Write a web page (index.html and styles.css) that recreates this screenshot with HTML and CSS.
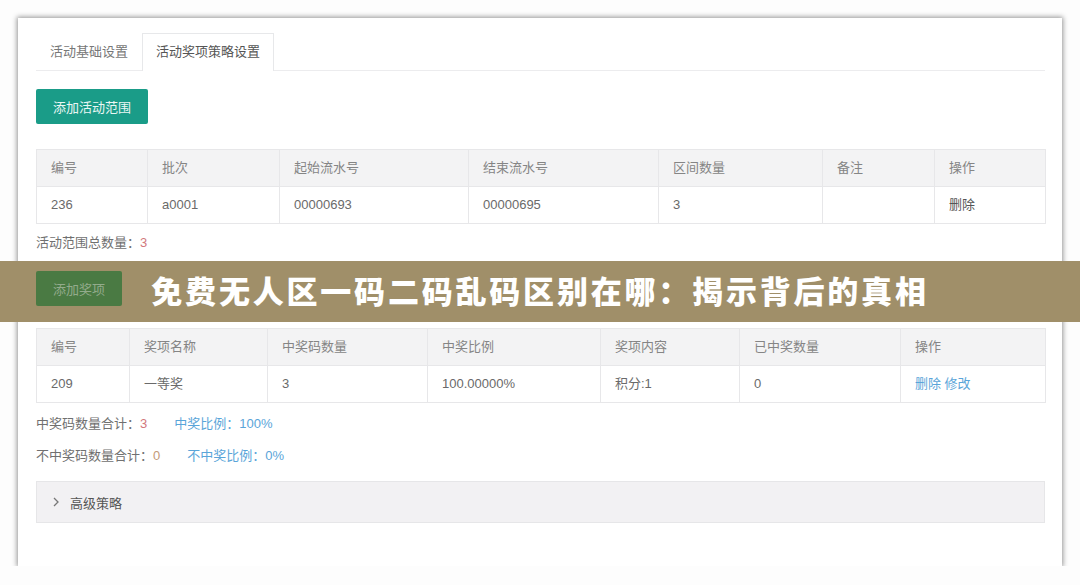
FILE: index.html
```html
<!DOCTYPE html>
<html lang="zh-CN">
<head>
  <meta charset="UTF-8">
  <title>活动奖项策略设置</title>
  <link rel="stylesheet" href="styles.css">
</head>
<body>

  <!-- 主面板 -->
  <div class="panel">
    <ul class="tabs">
      <li class="tab">活动基础设置</li>
      <li class="tab active">活动奖项策略设置</li>
    </ul>

    <div class="tab-body">
      <button class="btn btn-teal">添加活动范围</button>

      <!-- 活动范围 -->
      <table class="grid range-table">
        <thead>
          <tr><th>编号</th><th>批次</th><th>起始流水号</th><th>结束流水号</th><th>区间数量</th><th>备注</th><th>操作</th></tr>
        </thead>
        <tbody>
          <tr><td>236</td><td>a0001</td><td>00000693</td><td>00000695</td><td>3</td><td></td><td class="op-dark">删除</td></tr>
        </tbody>
      </table>
      <p class="summary">活动范围总数量：<span class="num-red">3</span></p>

      <button class="btn btn-prize">添加奖项</button>

      <!-- 奖项 -->
      <table class="grid prize-table">
        <thead>
          <tr><th>编号</th><th>奖项名称</th><th>中奖码数量</th><th>中奖比例</th><th>奖项内容</th><th>已中奖数量</th><th>操作</th></tr>
        </thead>
        <tbody>
          <tr><td>209</td><td>一等奖</td><td>3</td><td>100.00000%</td><td>积分:1</td><td>0</td><td class="op-link">删除 修改</td></tr>
        </tbody>
      </table>
      <p class="summary summary-first">中奖码数量合计：<span class="num-red">3</span><span class="rate">中奖比例：100%</span></p>
      <p class="summary summary-second">不中奖码数量合计：<span class="num-tan">0</span><span class="rate">不中奖比例：0%</span></p>

      <!-- 高级策略 -->
      <div class="collapse">
        <svg class="chevron" width="8" height="12" viewBox="0 0 8 12"><polyline points="2,2 6,6 2,10" fill="none" stroke="#777" stroke-width="1.3"/></svg>
        <span>高级策略</span>
      </div>
    </div>
  </div>

  <!-- 标题横幅 -->
  <div class="banner">免费无人区一码二码乱码区别在哪：揭示背后的真相</div>

</body>
</html>
```

FILE: styles.css
```css
body {
  margin: 0;
  padding: 0;
  background: #fdfdfd;
  font-family: "Liberation Sans", "Noto Sans CJK SC", sans-serif;
  font-size: 13px;
  color: #676a6c;
  position: relative;
}

/* 主面板 */
.panel {
  width: 1044px;
  height: 548px;
  margin: 18px 0 0 18px;
  padding: 15px 17px 0 18px;
  box-sizing: border-box;
  background: #fff;
  box-shadow: 0 0 5px 1px rgba(0, 0, 0, 0.42);
}

/* 选项卡 */
.tabs {
  list-style: none;
  margin: 0;
  padding: 0;
  display: flex;
  border-bottom: 1px solid #ececee;
}
.tab {
  padding: 0 13px;
  line-height: 36px;
  border: 1px solid transparent;
  border-bottom: none;
  margin-bottom: -1px;
  color: #777;
}
.tab.active {
  background: #fff;
  border-color: #e7e8ea;
  padding-bottom: 1px;
  color: #555;
}

/* 按钮 */
.btn {
  display: block;
  height: 35px;
  padding: 0 17px;
  border: none;
  border-radius: 2px;
  font-family: inherit;
  font-size: 13px;
}
.btn-teal {
  margin-top: 18px;
  background: #1a9c88;
  color: #eaf7f4;
}
.btn-prize {
  margin-top: 18px;
  background: #4a7a43;
  color: #93ab8c;
  position: relative;
  z-index: 2;
}

/* 表格 */
.grid {
  width: 1009px;
  border-collapse: collapse;
  table-layout: fixed;
}
.range-table { margin-top: 25px; }
.prize-table { margin-top: 22px; }
.grid th,
.grid td {
  box-sizing: border-box;
  border: 1px solid #e7e7e9;
  padding: 8px 14px;
  line-height: 20px;
  text-align: left;
  font-weight: normal;
  white-space: nowrap;
}
.grid th {
  background: #f3f3f4;
  color: #858585;
}
.grid td { color: #6a6a6a; }

.range-table th:nth-child(1) { width: 111px; }
.range-table th:nth-child(2) { width: 132px; }
.range-table th:nth-child(3) { width: 189px; }
.range-table th:nth-child(4) { width: 190px; }
.range-table th:nth-child(5) { width: 164px; }
.range-table th:nth-child(6) { width: 112px; }
.range-table th:nth-child(7) { width: 111px; }

.prize-table th:nth-child(1) { width: 93px; }
.prize-table th:nth-child(2) { width: 138px; }
.prize-table th:nth-child(3) { width: 160px; }
.prize-table th:nth-child(4) { width: 173px; }
.prize-table th:nth-child(5) { width: 139px; }
.prize-table th:nth-child(6) { width: 161px; }
.prize-table th:nth-child(7) { width: 145px; }

.grid td.op-dark { color: #555; }
.grid td.op-link { color: #5aa5d9; }

/* 合计 */
.summary {
  margin: 9px 0 0;
  line-height: 20px;
  color: #707070;
}
.summary-first { margin-top: 11px; }
.summary-second { margin-top: 12px; }
.num-red { color: #d2787d; }
.num-tan { color: #c49a78; }
.rate {
  margin-left: 27px;
  color: #5aa5d9;
}

/* 高级策略 */
.collapse {
  margin-top: 15px;
  width: 1009px;
  height: 42px;
  box-sizing: border-box;
  background: #f2f1f3;
  border: 1px solid #e6e6e8;
  display: flex;
  align-items: center;
  padding-left: 15px;
  gap: 10px;
  color: #555;
}
.chevron { display: block; }

/* 标题横幅 */
.banner {
  position: absolute;
  top: 261px;
  left: 0;
  width: 1080px;
  height: 61px;
  background: #a08f69;
  color: #fff;
  font-family: "Noto Sans CJK SC", sans-serif;
  font-weight: 900;
  font-size: 31px;
  letter-spacing: 2.8px;
  line-height: 58px;
  text-align: center;
  z-index: 1;
}
```
